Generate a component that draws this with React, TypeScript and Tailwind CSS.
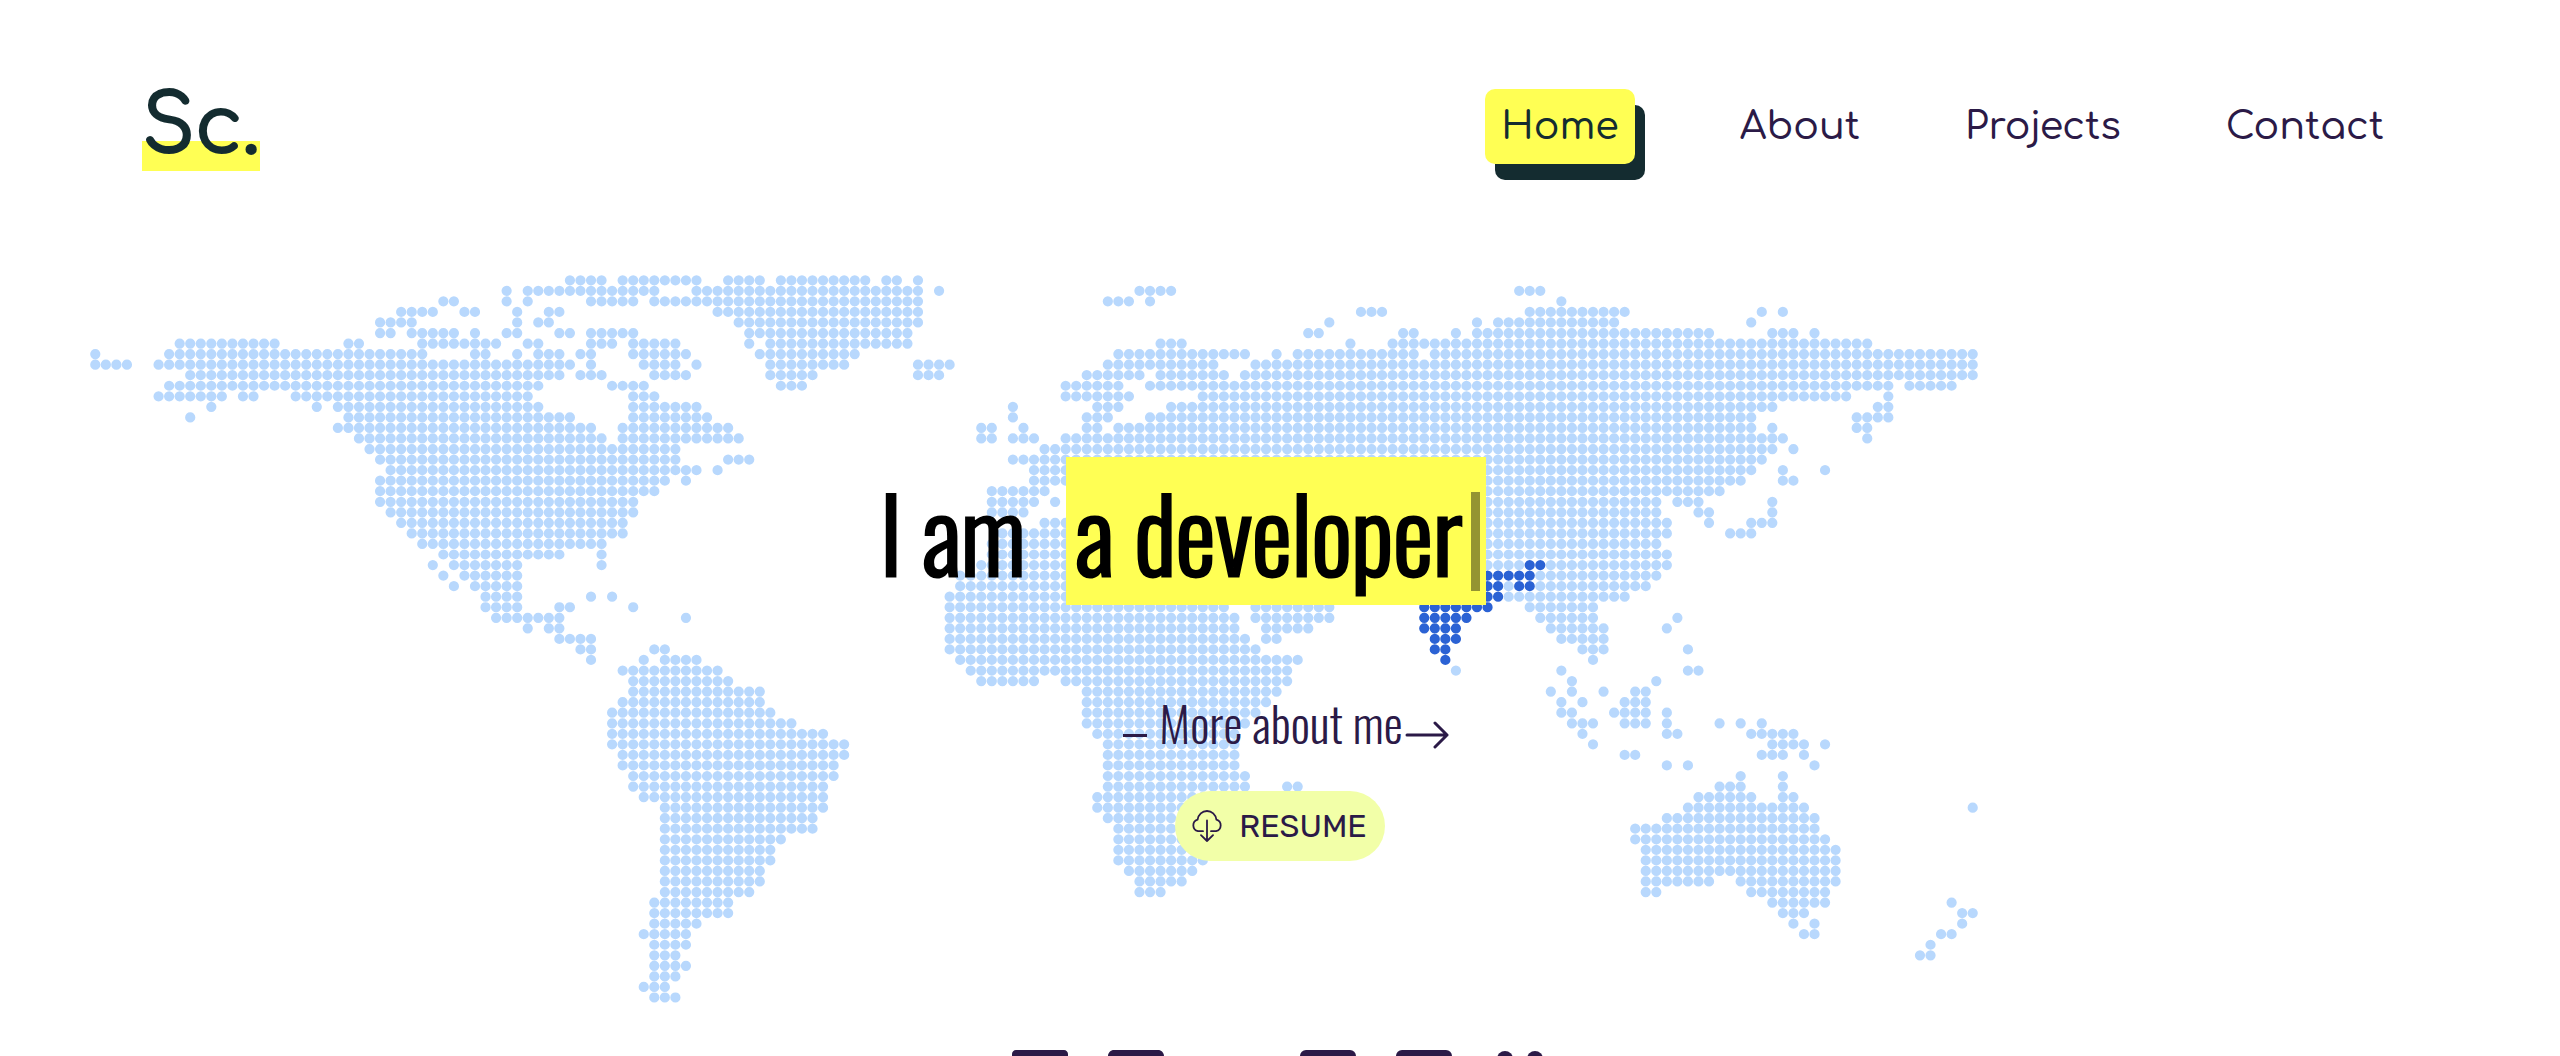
import React from "react";
import {
  FaBehance,
  FaFacebookSquare,
  FaGithubSquare,
  FaInstagramSquare,
  FaLinkedin,
} from "react-icons/fa";

/* One string per row of the dot grid; each entry is a column or a column range. */
const LAND: string[] = [
  "45-48 50-57 60-63 65-73 75-76 78",
  "39 41-53 57-78 80 99-102 135-137",
  "33-34 39 41 47-51 53-78 96-98 100 139",
  "29-32 35-36 40 43-44 59-78 120-122 136-145 158 160",
  "27-30 40 42-43 61-78 117 131 133-144 157",
  "27-28 30-34 36 39-40 44-45 47-51 62-77 115-116 124-125 129 131-153 159-161 163",
  "8-17 24-25 31-38 41-42 47-49 51-55 62 64-77 101-103 119 123-168",
  "0 7-31 36-37 40 42-44 46-47 51-56 63-72 97-109 112 114-125 127-178",
  "0-3 6-45 47 52-55 57 64-71 78-81 96-106 110-178",
  "9-44 46-48 53-56 64-68 78-80 94-99 101-107 109-178",
  "7-42 49-52 65-67 92-97 100-170 172-176",
  "6-12 14-15 19-41 51-53 92-98 105-166 170",
  "11 21 23-42 51-57 87 95-97 102-159 169-170",
  "9 24-45 51-58 87 94-96 100-157 167-170",
  "23-47 50-60 84-85 88 94-95 97-157 159 167-168",
  "25-48 50-61 84-85 87-89 92-160 168",
  "26-55 90-159 161",
  "27-55 60-62 87-158",
  "28-57 59 89-157 160 164",
  "27-54 56 89-156 160-161",
  "27-53 85-90 93-154",
  "27-51 85-89 91 93-148 150-152 159",
  "28-51 85-88 93-148 152-153 159",
  "29-50 90-149 153 157-159",
  "30-50 86-149 155-157",
  "31-48 85-148",
  "33-44 48 85-149",
  "32 34-40 48 84-135 138-149",
  "33 35-40 82-126 137-148",
  "34 36-40 82-126 134 137-147",
  "37-40 47 49 81-126 134-145",
  "37-40 44-45 51 81-107 110-117 136-142",
  "38-44 56 81-108 110-117 137-142 150",
  "41 43-44 81-108 111-115 138-143 149",
  "44-47 81-109 111-112 139-143",
  "46-47 53-54 81-110 141-143 151",
  "47 52 54-57 82-114 142",
  "50-59 83-113 129 139 151-152",
  "51-60 84-89 92-113 140 148",
  "51-63 94-112 138 140 143 146-147",
  "50-63 94-111 139 141 145-147",
  "49-64 94-110 139-140 144-147 149",
  "49-66 94-109 140-142 145-147 149 154 156 158",
  "49-69 95-108 141 149-150 157-161",
  "49-71 96-108 142 159-162 164",
  "50-71 96-108 145-146 158-160 162",
  "50-70 96-108 149 151 163",
  "51-70 96-109 156 160",
  "51-69 96-109 113-114 154-156 160",
  "52-69 95-108 152-157 160-161",
  "54-69 95-107 151-162 178",
  "54-68 96-106 149-163",
  "54-68 97-106 146-163",
  "54-65 97-106 146-164",
  "54-64 97-105 147-165",
  "54-64 97-105 147-165",
  "54-63 98-104 147-165",
  "54-63 99-103 147-153 156-165",
  "54-62 99-101 147-148 157-164",
  "53-60 159-164 176",
  "53-60 160-162 177-178",
  "53-57 161 163 177",
  "52-56 162-163 175-176",
  "53-56 174",
  "53-55 173-174",
  "53-56",
  "53-55",
  "52-54",
  "53-55",
];

const INDIA: Record<number, string> = {
  27: "136-137",
  28: "127-136",
  29: "127-133 135-136",
  30: "127-133",
  31: "126-132",
  32: "126-130",
  33: "126-129",
  34: "127-129",
  35: "127-128",
  36: "128",
};

/* Turns a row's ranges into zero-length strokes, drawn as dots by round caps. */
function rowPath(row: number, ranges: string): string {
  return ranges
    .split(" ")
    .map((range) => {
      const [from, to] = range.split("-").map(Number);
      let d = "";
      for (let col = from; col <= (to ?? from); col++) {
        d += `M${col * 10 + 5} ${row * 10 + 5}h0`;
      }
      return d;
    })
    .join("");
}

const LAND_PATH = LAND.map((ranges, row) => rowPath(row, ranges)).join("");
const INDIA_PATH = Object.entries(INDIA)
  .map(([row, ranges]) => rowPath(Number(row), ranges))
  .join("");

function WorldMap() {
  return (
    <svg
      viewBox="0 0 1790 690"
      aria-hidden="true"
      fill="none"
      strokeLinecap="round"
      strokeWidth="9.7"
      className="pointer-events-none absolute top-0 left-[3.5%] -z-10 w-[73.75%]"
    >
      <path d={LAND_PATH} stroke="#b8d8fd" />
      <path d={INDIA_PATH} stroke="#2b62d4" />
    </svg>
  );
}

function CloudDownload() {
  return (
    <svg
      viewBox="0 0 32 32"
      aria-hidden="true"
      fill="none"
      stroke="currentColor"
      strokeWidth="1.8"
      strokeLinecap="round"
      strokeLinejoin="round"
      className="size-8"
    >
      <path d="M12 21.2H7A6 6 0 0 1 6.6 9.6C7.4 4.6 11.2 1 16 1s8.600 3.600 9.400 8.600A6 6 0 0 1 25 21.200h-5" />
      <path d="M16 10.500V31M10 25.200l6 5.800 6-5.800" />
    </svg>
  );
}

function ArrowRight() {
  return (
    <svg
      viewBox="0 0 44 32"
      aria-hidden="true"
      fill="none"
      stroke="currentColor"
      strokeWidth="3"
      strokeLinecap="round"
      strokeLinejoin="round"
      className="mt-6 ml-0.5 h-8 w-11"
    >
      <path d="M2 16H42M30 4l12 12-12 12" />
    </svg>
  );
}

function Fork({ className }: { className?: string }) {
  return (
    <svg viewBox="0 0 64 64" aria-hidden="true" className={className}>
      <g fill="currentColor">
        <circle cx="17" cy="13" r="8" />
        <circle cx="47" cy="13" r="8" />
        <circle cx="32" cy="52" r="8" />
      </g>
      <path
        d="M17 20v6q0 6 6 6h18q6 0 6-6v-6M32 32v14"
        fill="none"
        stroke="currentColor"
        strokeWidth="5"
      />
    </svg>
  );
}

const SOCIALS = [
  { label: "LinkedIn", Icon: FaLinkedin },
  { label: "GitHub", Icon: FaGithubSquare },
  { label: "Behance", Icon: FaBehance },
  { label: "Facebook", Icon: FaFacebookSquare },
  { label: "Instagram", Icon: FaInstagramSquare },
  { label: "Forks", Icon: Fork },
];

export default function App() {
  return (
    <div className="h-screen overflow-hidden bg-white text-[#2b1a47]">
      <header className="flex items-start justify-between px-[142px] pt-16 font-['Comfortaa','Quicksand','Lato',sans-serif]">
        <a
          href="#home"
          className="mt-1 bg-linear-to-t from-[#ffff54] from-[30px] to-transparent to-[30px] pt-4 text-[80px] leading-[87px] text-[#142c30] [-webkit-text-stroke:2px]"
        >
          Sc.
        </a>
        <nav className="mt-[25px] mr-[18px] flex gap-[73px] text-[38px] leading-[73px] font-medium">
          <a
            href="#home"
            className="mr-4 rounded-[10px] bg-[#ffff54] px-4 pt-0.5 text-[#142c30] shadow-[10px_16px_0_#142c30]"
          >
            Home
          </a>
          <a href="#about" className="px-4 pt-0.5">About</a>
          <a href="#projects" className="px-4 pt-0.5">Projects</a>
          <a href="#contact" className="px-4 pt-0.5">Contact</a>
        </nav>
      </header>

      <main className="relative isolate mt-[104px] pt-[182px]">
        <WorldMap />
        <div className="mx-auto flex max-w-[800px] flex-col items-center">
          <h1 className="flex items-center gap-10 self-start font-['Oswald','Roboto',sans-serif] text-[100px] leading-[148px] font-light whitespace-nowrap text-black [-webkit-text-stroke:3px]">
            <span>I am</span>
            <span className="flex items-center bg-[#ffff54] pr-[6px] pl-[10px]">
              a developer
              <span className="mt-5 ml-2 h-[99px] w-[9px] bg-[#949432]" />
            </span>
          </h1>
          <a
            href="#about"
            className="mt-[88px] flex items-center pl-3 font-['Oswald','Roboto',sans-serif] text-[48px] leading-[60px] font-light"
          >
            <span className="mt-6 mr-3 h-[3px] w-6 bg-current" />
            More about me
            <ArrowRight />
          </a>
          <button
            type="button"
            className="mt-[38px] flex h-[70px] items-center gap-4 rounded-full bg-[#f2ffa8] pr-[18px] pl-4 font-['Rubik','Roboto',sans-serif] text-[32px]"
          >
            <CloudDownload />
            RESUME
          </button>
        </div>
        <div className="mt-[185px] flex justify-center gap-8">
          {SOCIALS.map(({ label, Icon }) => (
            <a key={label} href={"#" + label.toLowerCase()} aria-label={label}>
              <Icon className="size-16" />
            </a>
          ))}
        </div>
      </main>
    </div>
  );
}
